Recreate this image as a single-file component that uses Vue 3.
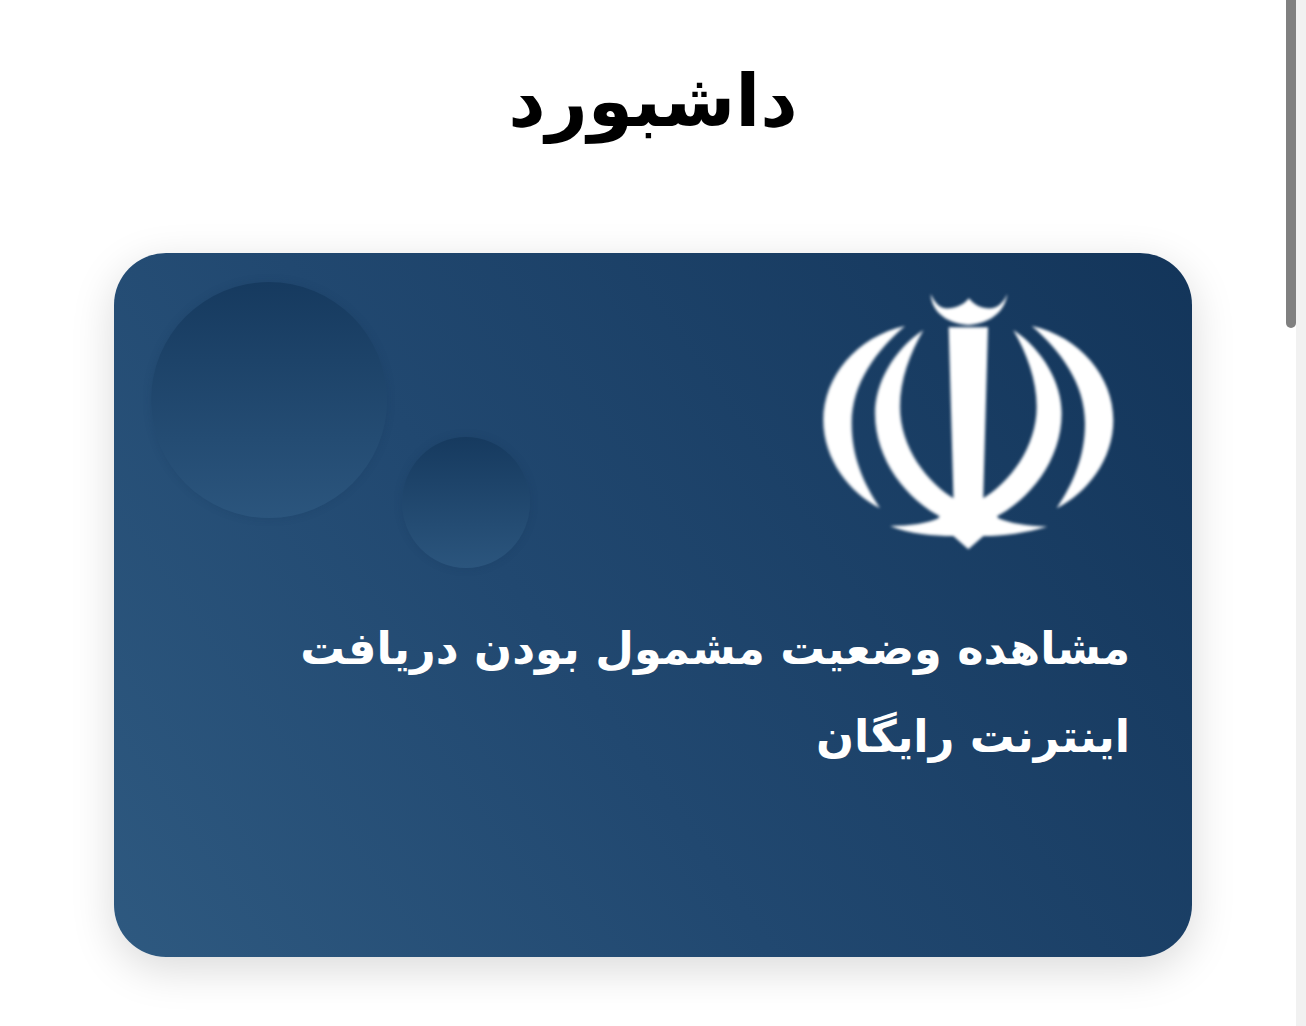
<script setup>
const lines = ['مشاهده وضعیت مشمول بودن دریافت', 'اینترنت رایگان']
</script>

<template>
  <main class="page" dir="rtl">
    <h1 class="title">داشبورد</h1>
    <section class="card">
      <span class="bubble bubble-large"></span>
      <span class="bubble bubble-small"></span>
      <svg class="emblem" viewBox="0 0 1020 900" aria-hidden="true">
        <defs>
          <filter id="soft" x="-5%" y="-5%" width="110%" height="110%">
            <feGaussianBlur stdDeviation="5" />
          </filter>
          <g id="half">
            <path d="M315 168C170 200 70 320 70 450C70 570 150 670 240 715C190 640 155 560 155 460C155 340 230 240 315 168Z" />
            <path d="M370 180C280 240 225 340 225 430C225 570 320 690 430 745L470 690C380 640 300 530 300 410C300 330 330 250 370 180Z" />
          </g>
        </defs>
        <g fill="#fff" filter="url(#soft)">
          <use href="#half" />
          <use href="#half" transform="matrix(-1 0 0 1 1010 0)" />
          <path d="M446 172H564L548 740H462Z" />
          <path d="M270 768C330 768 385 760 415 745L450 690H560L595 745C630 760 680 768 742 770C680 788 610 798 550 798L505 838L460 798C400 798 330 792 270 768Z" />
          <path d="M392 72C395 120 430 158 505 165C580 158 615 120 622 72C610 100 590 118 560 115C535 112 518 100 507 85C495 100 475 113 450 115C420 118 405 100 392 72Z" />
        </g>
      </svg>
      <p class="message">
        <span v-for="line in lines" :key="line" class="line">{{ line }}</span>
      </p>
    </section>
    <div class="scroll-track" aria-hidden="true"><span class="scroll-thumb"></span></div>
  </main>
</template>

<style scoped>
.page {
  position: relative;
  box-sizing: border-box;
  width: 1306px;
  height: 1026px;
  padding: 0 114px;
  overflow: hidden;
  background: #fff;
  font-family: "DejaVu Sans", "Noto Sans", sans-serif;
}
.title {
  margin: 0;
  padding-top: 49px;
  height: 253px;
  box-sizing: border-box;
  text-align: center;
  font-size: 73px;
  line-height: 104px;
  font-weight: 700;
  color: #000;
}
.card {
  position: relative;
  box-sizing: border-box;
  display: flex;
  flex-direction: column;
  align-items: flex-start;
  width: 1078px;
  height: 704px;
  padding: 17px 62px 0;
  border-radius: 52px;
  background: linear-gradient(235deg, #13355a 0%, #214870 58%, #2e5980 100%);
  box-shadow: 0 12px 44px rgba(0, 0, 0, 0.15);
}
.bubble {
  position: absolute;
  border-radius: 50%;
  background: linear-gradient(180deg, #163a5f 0%, #2b557d 100%);
  box-shadow: 0 0 8px rgba(20, 50, 85, 0.2);
}
.bubble-large {
  left: 37px;
  top: 29px;
  width: 236px;
  height: 236px;
}
.bubble-small {
  left: 288px;
  top: 184px;
  width: 128px;
  height: 131px;
}
.emblem {
  display: block;
  width: 340px;
  height: 300px;
  margin-inline-start: -10px;
}
.message {
  margin: 35px 0 0;
  align-self: stretch;
  color: #fff;
  font-size: 44.6px;
  font-weight: 700;
  line-height: 88px;
  text-align: right;
}
.line {
  display: block;
  white-space: nowrap;
}
.scroll-track {
  position: absolute;
  top: 0;
  right: 0;
  width: 10px;
  height: 100%;
  background: #f1f1f1;
}
.scroll-thumb {
  position: absolute;
  top: 0;
  right: 10px;
  width: 10px;
  height: 328px;
  border-radius: 0 0 5px 5px;
  background: #808080;
}
</style>
